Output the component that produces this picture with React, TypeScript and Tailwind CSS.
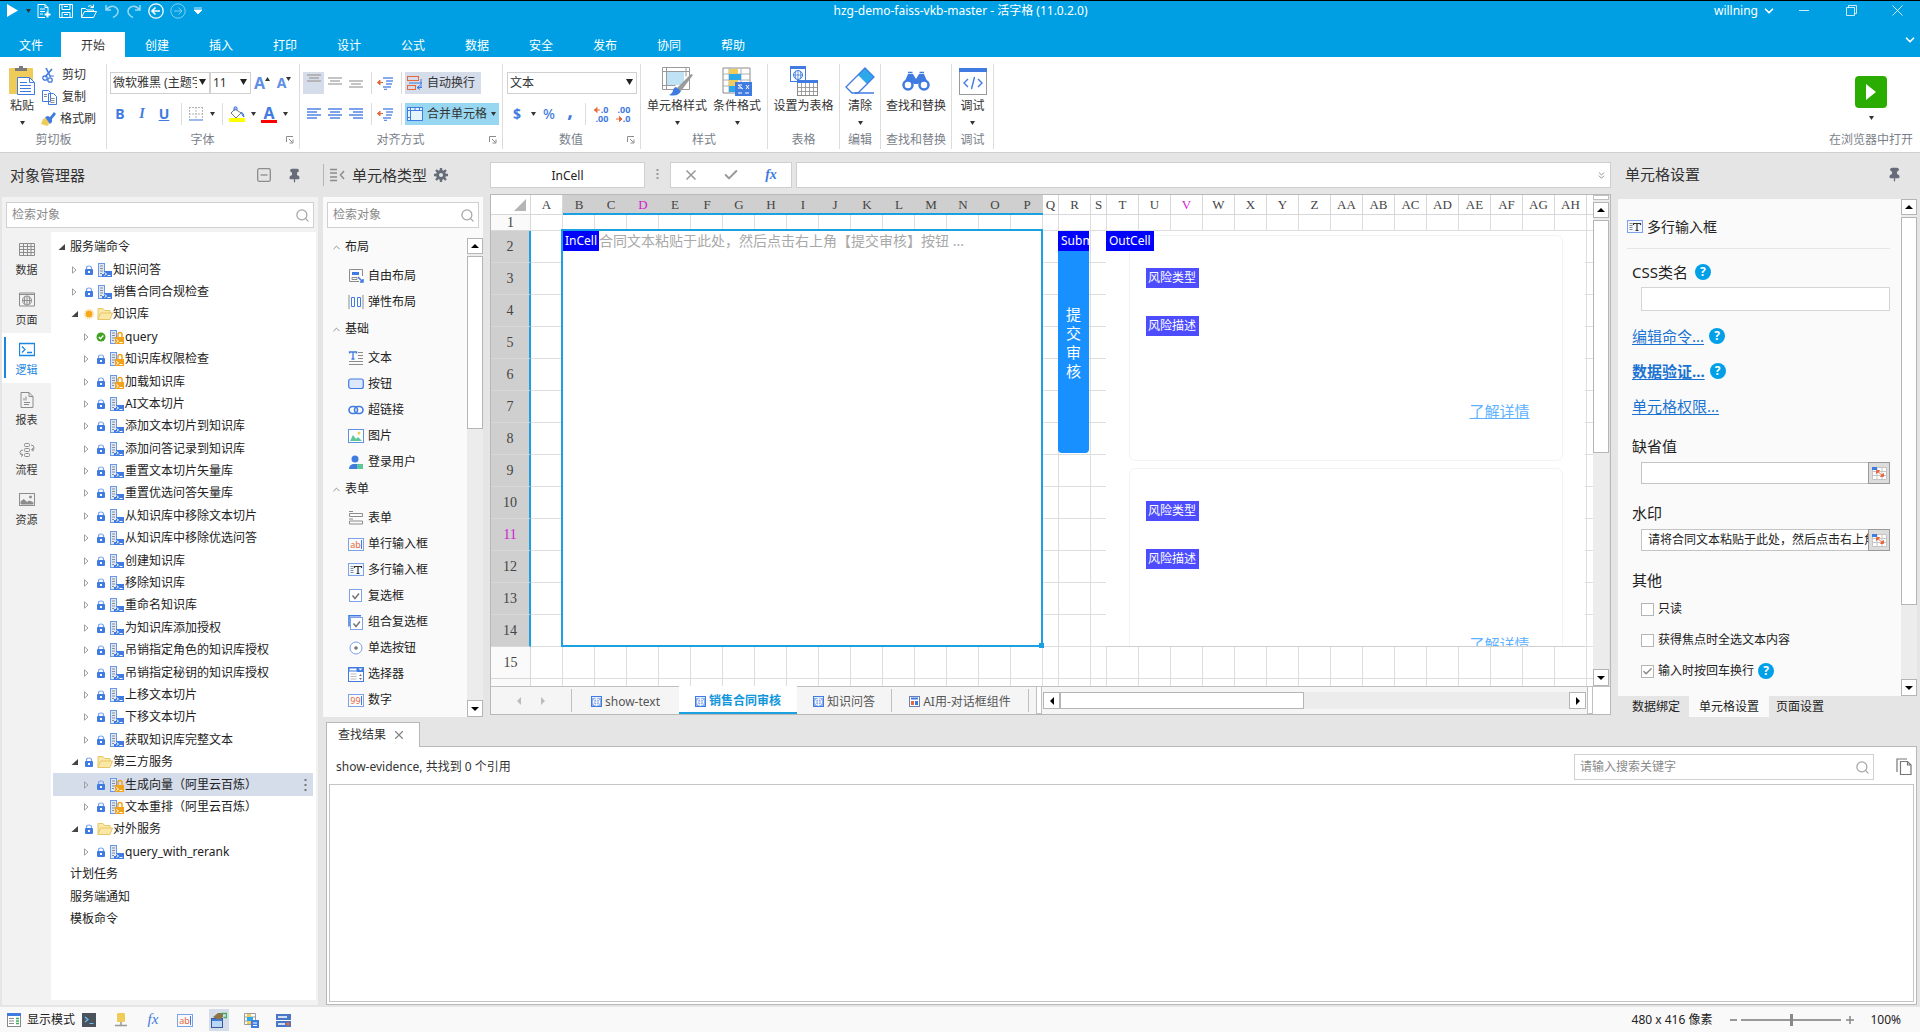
import type { ReactNode } from "react";
import { Check, ChevronDown, ChevronUp, ChevronsDown, Pin, Search, X } from "lucide-react";
import clsx from "clsx";

const BLUE = "#3f7be0";
const ORANGE = "#e8683c";
const GRAY = "#8c8c8c";

function Svg({ w = 16, h = 16, children }: { w?: number; h?: number; children: ReactNode }) {
  return (
    <svg width={w} height={h} viewBox={`0 0 ${w} ${h}`} fill="none" className="shrink-0" aria-hidden="true">
      {children}
    </svg>
  );
}

function Caret({ className = "text-[#333]" }: { className?: string }) {
  return (
    <svg width="5" height="4" viewBox="0 0 5 4" className={clsx("shrink-0", className)} aria-hidden="true">
      <path d="M0 0h5L2.5 4z" fill="currentColor" />
    </svg>
  );
}

function Arrow({ dir }: { dir: "up" | "down" | "left" | "right" }) {
  const d = {
    up: "M1 7h8L5 3z",
    down: "M1 3h8L5 7z",
    left: "M7 1v8L3 5z",
    right: "M3 1v8l4-4z",
  }[dir];
  return (
    <Svg w={10} h={10}>
      <path d={d} fill="currentColor" />
    </Svg>
  );
}

function Help() {
  return (
    <button
      aria-label="帮助"
      className="flex h-4 w-4 items-center justify-center rounded-full bg-[#00a0e9] text-xs font-bold text-white"
    >
      ?
    </button>
  );
}

/* ---------- 标题栏 ---------- */

function TitleBar() {
  return (
    <header className="grid h-[31px] grid-cols-[1fr_auto_1fr] items-start pl-px text-xs leading-[19px] text-white">
      <div className="flex h-[19px] items-center">
        <button aria-label="运行" className="flex w-[22px] justify-center">
          <Svg w={11} h={13}>
            <path d="M0 0l11 6.500L0 13z" fill="#fff" />
          </Svg>
        </button>
        <button aria-label="运行选项" className="flex w-[10px] justify-center">
          <Caret />
        </button>
        <button aria-label="新建" className="flex w-[22px] justify-center">
          <Svg w={14} h={14}>
            <path d="M1 .5h7l3 3v4M8 13.500H1V.5M8 .5v3h3M3 5h5M3 7.500h5M3 10h3" stroke="#fff" />
            <path d="M10.500 7.500v6M7.500 10.500h6" stroke="#fff" strokeWidth="2" />
          </Svg>
        </button>
        <button aria-label="保存" className="flex w-[22px] justify-center">
          <Svg w={14} h={14}>
            <path d="M.5.5h13v13H.5zM3 .5v5h8v-5M3 13.500v-5h8v5M5 10.500h4M5 2.500h4" stroke="#fff" />
          </Svg>
        </button>
        <button aria-label="打开" className="flex w-[24px] justify-center">
          <Svg w={16} h={14}>
            <path d="M.5 13.500v-9h4l1.500 1.500h6.500v2M.5 13.500l3-6h12l-3 6zM7 2.500q2-2 5 .5M12.500.5V3.500H9.500" stroke="#fff" />
          </Svg>
        </button>
        <button aria-label="撤销" className="flex w-[22px] justify-center opacity-60">
          <Svg w={14} h={14}>
            <path d="M1 1v5h5M1 6q4-5 8-3.500t4 5-5 6" stroke="#fff" strokeWidth="1.500" />
          </Svg>
        </button>
        <button aria-label="重做" className="flex w-[22px] justify-center opacity-60">
          <Svg w={14} h={14}>
            <path d="M13 1v5H8M13 6Q9 1 5 2.500t-4 5 5 6" stroke="#fff" strokeWidth="1.500" />
          </Svg>
        </button>
        <button aria-label="后退" className="flex w-[22px] justify-center">
          <Svg>
            <circle cx="8" cy="8" r="7.200" stroke="#fff" strokeWidth="1.300" />
            <path d="M12 8H4.500M7.500 4.500L4 8l3.500 3.500" stroke="#fff" strokeWidth="1.600" />
          </Svg>
        </button>
        <button aria-label="前进" className="flex w-[22px] justify-center opacity-50">
          <Svg>
            <circle cx="8" cy="8" r="7.200" stroke="#fff" />
            <path d="M4 8h7.500M8.500 4.500L12 8l-3.500 3.500" stroke="#fff" />
          </Svg>
        </button>
        <button aria-label="自定义快速访问工具栏" className="flex w-[18px] justify-center">
          <Svg w={8} h={8}>
            <path d="M0 1h8M0 3h8L4 7z" stroke="#fff" fill="#fff" strokeWidth=".8" />
          </Svg>
        </button>
      </div>
      <h1>hzg-demo-faiss-vkb-master - 活字格 (11.0.2.0)</h1>
      <div className="flex h-[19px] items-center justify-end">
        <button className="flex items-center gap-1">
          willning
          <ChevronDown size={14} strokeWidth={3} />
        </button>
        <button aria-label="最小化" className="flex w-[56px] justify-center">
          <Svg w={10} h={10}>
            <path d="M0 4.500h10" stroke="#fff" strokeOpacity=".8" />
          </Svg>
        </button>
        <button aria-label="还原" className="flex w-[38px] justify-center">
          <Svg w={11} h={11}>
            <path d="M.5 2.500h8v8h-8zM2.500 2.500v-2h8v8h-2" stroke="#fff" strokeOpacity=".8" />
          </Svg>
        </button>
        <button aria-label="关闭" className="ml-1 flex w-[46px] justify-center">
          <Svg w={11} h={11}>
            <path d="M.5.5l10 10M10.500.5l-10 10" stroke="#fff" strokeOpacity=".8" />
          </Svg>
        </button>
      </div>
    </header>
  );
}

const TABS = ["文件", "开始", "创建", "插入", "打印", "设计", "公式", "数据", "安全", "发布", "协同", "帮助"];

function RibbonTabs() {
  return (
    <nav className="flex h-[25px] pl-px text-xs text-white">
      {TABS.map((t, i) => (
        <button
          key={t}
          className={clsx("pt-[2px]", i === 0 ? "w-[60px]" : "w-16", t === "开始" && "bg-white text-[#333]")}
        >
          {t}
        </button>
      ))}
      <button aria-label="折叠功能区" className="mr-[3px] ml-auto flex items-start pt-[1px]">
        <ChevronDown size={14} strokeWidth={3} />
      </button>
    </nav>
  );
}

/* ---------- 功能区 ---------- */

function Group({
  label,
  width,
  launcher,
  children,
}: {
  label: string;
  width: string;
  launcher?: boolean;
  children: ReactNode;
}) {
  return (
    <section className={clsx("flex shrink-0 flex-col border-r border-[#dcdcdc]", width)}>
      <div className="flex-1">{children}</div>
      <div className="flex h-[18px] items-center text-xs text-[#7a7f8a]">
        <span className="flex-1 text-center whitespace-nowrap">{label}</span>
        {launcher && (
          <button aria-label={`${label}设置`} className="mr-[5px] -ml-3 flex">
            <Svg w={8} h={8}>
              <path d="M.5 6V.5H7M3 3l3.500 3.500M7 3.500V7H3.500" stroke={GRAY} />
            </Svg>
          </button>
        )}
      </div>
    </section>
  );
}

function BigButton({
  label,
  width,
  caret,
  children,
}: {
  label: string;
  width: string;
  caret?: boolean;
  children: ReactNode;
}) {
  return (
    <button className={clsx("flex flex-col items-center pt-[2px] text-xs text-[#333]", width)}>
      <span className="flex h-[30px] items-center">{children}</span>
      <span className="leading-5 whitespace-nowrap">{label}</span>
      {caret && (
        <span className="mt-[5px]">
          <Caret />
        </span>
      )}
    </button>
  );
}

function Tool({
  label,
  width = "w-[22px]",
  active,
  children,
}: {
  label: string;
  width?: string;
  active?: boolean;
  children: ReactNode;
}) {
  return (
    <button
      aria-label={label}
      className={clsx("flex h-[22px] shrink-0 items-center justify-center", width, active && "bg-[#d5dcea]")}
    >
      {children}
    </button>
  );
}

function Sep({ className }: { className: string }) {
  return <span className={clsx("h-[22px] w-px shrink-0 bg-[#dcdcdc]", className)} />;
}

function Combo({ label, value, width }: { label: string; value: string; width: string }) {
  return (
    <span className={clsx("relative flex h-[22px] shrink-0", width)}>
      <select
        aria-label={label}
        className="w-full appearance-none border border-[#d0d0d0] bg-white pr-3 pl-[2px] text-xs text-[#333]"
      >
        <option>{value}</option>
      </select>
      <span className="pointer-events-none absolute top-[7px] right-[3px] text-[#222]">
        <Svg w={8} h={6}>
          <path d="M0 0h7L3.500 6z" fill="currentColor" />
        </Svg>
      </span>
    </span>
  );
}

function HLines({ widths, color = BLUE, gap = 3 }: { widths: number[]; color?: string; gap?: number }) {
  return (
    <Svg w={14} h={12}>
      {widths.map((w, i) => (
        <rect key={i} x={(14 - w) / 2} y={i * gap} width={w} height={2} fill={color} />
      ))}
    </Svg>
  );
}

function SideLines({ right }: { right?: boolean }) {
  return (
    <Svg w={14} h={12}>
      {[14, 10, 14, 10].map((w, i) => (
        <rect key={i} x={right ? 14 - w : 0} y={i * 3} width={w} height={2} fill="#7ba2ea" />
      ))}
    </Svg>
  );
}

function IndentIcon() {
  return (
    <Svg w={16} h={13}>
      <path d="M6 1h10M9 4h7M9 7h6M6 10h8M7 12.500h3" stroke="#5f8fe6" strokeWidth="1.500" />
      <path d="M0 5.500h6M3 3L.5 5.500 3 8z" stroke={ORANGE} fill={ORANGE} />
    </Svg>
  );
}

function Ribbon() {
  return (
    <div className="flex h-[96px] border-b border-[#cfcfcf] bg-white pt-[7px] pb-[3px] pl-px">
      <Group label="剪切板" width="w-[106px]">
        <div className="flex pl-[2px]">
          <BigButton label="粘贴" width="w-[38px]" caret>
            <Svg w={26} h={30}>
              <rect x="0" y="2" width="24" height="26" rx="1" fill="#efcb5a" />
              <path d="M6 5V2h4V0h4v2h4v3z" fill="#7b7b7b" />
              <path d="M8.500 11.500h12l5 5v12h-17z" fill="#fff" stroke={BLUE} />
              <path d="M20.500 11.500v5h5M11 16.500h7M11 19.500h11M11 22.500h11M11 25.500h11" stroke={BLUE} />
            </Svg>
          </BigButton>
          <div className="flex flex-col text-xs text-[#333]">
            <button className="flex h-[22px] items-center gap-[5px] pl-px">
              <Svg w={15} h={15}>
                <path d="M4 0l4.500 9M10 1L3 9" stroke={BLUE} strokeWidth="1.600" />
                <circle cx="3" cy="10" r="2.200" stroke={BLUE} strokeWidth="1.300" />
                <circle cx="8" cy="12" r="2.200" stroke={BLUE} strokeWidth="1.300" />
                <path d="M8 8h4" stroke={BLUE} />
              </Svg>
              剪切
            </button>
            <button className="flex h-[22px] items-center gap-[5px] pl-px">
              <Svg w={15} h={15}>
                <path d="M.5.5h6l2 2v9h-8zM6.500 3.500h5l3 3v8h-8z" fill="#fff" stroke={BLUE} />
                <path d="M8.500 8.500h4M8.500 10.500h4M8.500 12.500h4M2 4.500h3M2 6.500h3" stroke={GRAY} />
              </Svg>
              复制
            </button>
            <button className="flex h-[22px] items-center gap-1">
              <Svg w={15} h={14}>
                <path d="M2 7l4-2 4 5-4 4-3-1-3-1z" fill="#efcb5a" />
                <path d="M4 5l3-1 2 1 4-5 2 2-4 5v3l-2 2z" fill={BLUE} />
              </Svg>
              格式刷
            </button>
          </div>
        </div>
      </Group>

      <Group label="字体" width="w-[193px]" launcher>
        <div className="flex flex-col gap-[9px] pt-2">
          <div className="flex pl-[3px]">
            <Combo label="字体" value="微软雅黑 (主题字体)" width="w-[100px]" />
            <Combo label="字号" value="11" width="w-[41px]" />
            <Tool label="增大字号">
              <span className="text-base font-bold text-[#5f8fe6]">A</span>
              <span className="mb-2 rotate-180">
                <Caret />
              </span>
            </Tool>
            <Tool label="减小字号">
              <span className="text-sm font-bold text-[#5f8fe6]">A</span>
              <span className="mb-2">
                <Caret />
              </span>
            </Tool>
          </div>
          <div className="flex pl-[2px] text-sm text-[#3f7be0]">
            <Tool label="加粗">
              <b>B</b>
            </Tool>
            <Tool label="倾斜">
              <b className="font-['Liberation_Serif',serif] italic">I</b>
            </Tool>
            <Tool label="下划线">
              <b className="underline">U</b>
            </Tool>
            <Sep className="mx-[6px]" />
            <Tool label="边框" width="w-4">
              <Svg w={14} h={14}>
                <path d="M.5 0v13M13.500 0v13M0 .5h14M7 0v13M0 7h14" stroke="#b5b5b5" strokeDasharray="2 1" />
                <path d="M0 13h14" stroke="#7fa3e8" strokeWidth="1.500" />
              </Svg>
            </Tool>
            <Tool label="边框选项" width="w-4">
              <Caret />
            </Tool>
            <Sep className="mr-[6px] ml-[2px]" />
            <Tool label="填充颜色" width="w-4">
              <Svg w={16} h={16}>
                <path d="M6 3l6 4-5 5-5-5z" stroke="#777" fill="#fff" />
                <path d="M5 5V1.500q1.500-1.500 3 0V4M12 6q3 1 3 5-2-1-2-3z" stroke={BLUE} fill={BLUE} fillOpacity=".4" />
                <rect y="12" width="16" height="4" fill="#ff0" />
              </Svg>
            </Tool>
            <Tool label="填充颜色选项" width="w-4">
              <Caret />
            </Tool>
            <Tool label="字体颜色" width="w-4">
              <span className="flex flex-col items-center">
                <b className="text-base leading-[14px]">A</b>
                <span className="h-[3px] w-4 bg-[#f00]" />
              </span>
            </Tool>
            <Tool label="字体颜色选项" width="w-4">
              <Caret />
            </Tool>
          </div>
        </div>
      </Group>

      <Group label="对齐方式" width="w-[203px]" launcher>
        <div className="flex flex-col gap-[9px] pt-2 pl-[3px] text-xs text-[#333]">
          <div className="flex">
            <Tool label="顶端对齐" width="w-[21px]" active>
              <span className="mb-[6px]">
                <HLines widths={[14, 10, 14]} color="#b5b5b5" />
              </span>
            </Tool>
            <Tool label="垂直居中" width="w-[21px]">
              <HLines widths={[14, 10, 14]} color="#c4c4c4" />
            </Tool>
            <Tool label="底端对齐" width="w-[21px]">
              <span className="mt-[6px]">
                <HLines widths={[14, 10, 14]} color="#c4c4c4" />
              </span>
            </Tool>
            <Sep className="mx-[5px]" />
            <Tool label="减少缩进" width="w-4">
              <IndentIcon />
            </Tool>
            <Sep className="mr-[3px] ml-2" />
            <button className="flex h-[22px] w-[76px] items-center gap-1 bg-[#d5dcea] pl-[2px]">
              <Svg w={16} h={15}>
                <rect x=".5" y=".5" width="11" height="4" stroke={ORANGE} />
                <rect x=".5" y="9.500" width="8" height="4" stroke={ORANGE} />
                <path d="M2 7h13M14 3v8M11 11.500h4M13 9.500l-3 2 3 2" stroke={BLUE} />
              </Svg>
              自动换行
            </button>
          </div>
          <div className="flex">
            <Tool label="左对齐" width="w-[21px]">
              <SideLines />
            </Tool>
            <Tool label="水平居中" width="w-[21px]">
              <HLines widths={[14, 10, 14, 10]} color="#7ba2ea" />
            </Tool>
            <Tool label="右对齐" width="w-[21px]">
              <SideLines right />
            </Tool>
            <Sep className="mx-[5px]" />
            <Tool label="增加缩进" width="w-4">
              <IndentIcon />
            </Tool>
            <Sep className="mr-[3px] ml-2" />
            <button className="flex h-[22px] w-[94px] items-center gap-1 bg-[#98d7f2] pl-[2px]">
              <Svg w={16} h={14}>
                <rect x=".5" y=".5" width="15" height="13" fill="#e5f3fb" stroke={BLUE} />
                <path d="M0 3.500h16M3.500 0v14M12.500 0v3.500M8 0v3.500M0 10.500h3.500" stroke={BLUE} />
              </Svg>
              合并单元格
              <Caret />
            </button>
          </div>
        </div>
      </Group>

      <Group label="数值" width="w-[138px]" launcher>
        <div className="flex flex-col gap-[9px] pt-2 pl-1">
          <Combo label="数值格式" value="文本" width="w-[130px]" />
          <div className="flex text-sm font-medium text-[#3f7be0]">
            <Tool label="货币" width="w-5">
              <b>$</b>
            </Tool>
            <Tool label="货币选项" width="w-3">
              <Caret />
            </Tool>
            <Tool label="百分比" width="w-5">
              %
            </Tool>
            <Tool label="千位分隔">
              <b className="mb-2 text-xl">,</b>
            </Tool>
            <Sep className="mx-1" />
            <Tool label="增加小数位">
              <span className="flex flex-col items-end text-[9px] leading-[9px] font-bold">
                <span className="flex items-center">
                  <Svg w={7} h={6}>
                    <path d="M0 3h6M3 .5L.5 3 3 5.500z" stroke={ORANGE} fill={ORANGE} />
                  </Svg>
                  .0
                </span>
                <span>.00</span>
              </span>
            </Tool>
            <Tool label="减少小数位">
              <span className="flex flex-col items-end text-[9px] leading-[9px] font-bold">
                <span>.00</span>
                <span className="flex items-center">
                  <Svg w={7} h={6}>
                    <path d="M0 3h6M3.500 .5L6 3 3.500 5.500z" stroke={ORANGE} fill={ORANGE} />
                  </Svg>
                  .0
                </span>
              </span>
            </Tool>
          </div>
        </div>
      </Group>

      <Group label="样式" width="w-[127px]">
        <div className="flex pl-[3px]">
          <BigButton label="单元格样式" width="w-[66px]" caret>
            <Svg w={32} h={30}>
              <path d="M1.500 1.500h27v22h-27zM5.500 1.500v22M1.500 5.500h27M25 1.500v9M1.500 19.500h13" stroke="#9a9a9a" />
              <rect x="6" y="6" width="17" height="13" fill="#bfe3f5" />
              <path d="M30 8l2 1-12 16-4-3z" fill="#9a9a9a" />
              <path d="M15 21l5 4q-3 6-12 4 4-2 4-5 1-3 3-3z" fill={BLUE} />
            </Svg>
          </BigButton>
          <BigButton label="条件格式" width="w-[54px]" caret>
            <Svg w={30} h={30}>
              <path d="M1 2h27v25H1z" fill="#fff" stroke="#8a8a8a" />
              <path d="M1 8h27M1 14h27M1 20h27M7 2v25M19 2v25" stroke="#b0b0b0" />
              <rect x="7" y="3" width="9" height="5" fill="#efcb5a" />
              <rect x="7" y="8" width="12" height="6" fill="#2ba9ea" />
              <rect x="7" y="14" width="9" height="6" fill="#efcb5a" />
              <rect x="7" y="20" width="6" height="6" fill="#2ba9ea" />
              <rect x="13" y="16" width="17" height="14" fill={BLUE} />
              <path d="M16 19h4M16 22h4M16 19l5 4M24 19l3 4M24 23l3-4M16 27h4M23 27h4" stroke="#fff" />
            </Svg>
          </BigButton>
        </div>
      </Group>

      <Group label="表格" width="w-[72px]">
        <BigButton label="设置为表格" width="w-full">
          <Svg w={28} h={30}>
            <rect x=".5" y=".5" width="15" height="15" fill="#fff" stroke={BLUE} />
            <rect width="16" height="3" fill={BLUE} />
            <circle cx="8" cy="9" r="4.500" stroke={BLUE} />
            <path d="M3.500 9h9M8 4.500v9M6 5q-2 4 0 8M10 5q2 4 0 8" stroke={BLUE} strokeWidth=".8" />
            <rect x="7.500" y="14.500" width="20" height="15" fill="#fff" stroke="#8a8a8a" />
            <rect x="7" y="14" width="21" height="3" fill={BLUE} />
            <path d="M7 21.500h21M7 25.500h21M11.500 17v13M15.500 17v13M19.500 17v13M23.500 17v13" stroke="#8a8a8a" strokeWidth=".8" />
          </Svg>
        </BigButton>
      </Group>

      <Group label="编辑" width="w-[41px]">
        <BigButton label="清除" width="w-full" caret>
          <Svg w={30} h={28}>
            <path d="M20 1l9 9-7 7-9-9z" fill="#2ba9ea" />
            <path d="M20 1l9 9-16 16H7l-6-6z" stroke={BLUE} strokeWidth="1.300" />
            <path d="M10 26h19" stroke={BLUE} strokeWidth="1.500" />
          </Svg>
        </BigButton>
      </Group>

      <Group label="查找和替换" width="w-[71px]">
        <BigButton label="查找和替换" width="w-full">
          <Svg w={28} h={20}>
            <path d="M3 10l3-7h5l3 5 3-5h5l3 7-5-1-4 4h-4l-4-4z" fill={BLUE} />
            <path d="M6 1.500h4.500M17.500 1.500H22" stroke={BLUE} strokeWidth="1.500" />
            <circle cx="6" cy="14" r="4.500" stroke={BLUE} strokeWidth="2.500" fill="#fff" />
            <circle cx="22" cy="14" r="4.500" stroke={BLUE} strokeWidth="2.500" fill="#fff" />
          </Svg>
        </BigButton>
      </Group>

      <Group label="调试" width="w-[42px]">
        <BigButton label="调试" width="w-full" caret>
          <Svg w={28} h={27}>
            <rect x=".5" y=".5" width="27" height="26" stroke="#9a9a9a" />
            <rect width="28" height="4" fill={BLUE} />
            <path d="M9 11l-4 4 4 4M19 11l4 4-4 4M15.500 9l-3 12" stroke={BLUE} strokeWidth="1.400" />
          </Svg>
        </BigButton>
      </Group>

      <div className="ml-auto flex w-[98px] flex-col items-center pt-3">
        <button aria-label="在浏览器中打开" className="flex h-8 w-8 items-center justify-center rounded bg-[#2aad00]">
          <Svg w={10} h={16}>
            <path d="M0 0l10 8-10 8z" fill="#fff" />
          </Svg>
        </button>
        <span className="mt-2">
          <Caret />
        </span>
        <span className="mt-auto text-xs leading-[18px] text-[#7a7f8a]">在浏览器中打开</span>
      </div>
    </div>
  );
}

/* ---------- 对象管理器 ---------- */

function SearchBox({ label, width = "w-full" }: { label: string; width?: string }) {
  return (
    <label className={clsx("flex h-[26px] items-center border border-[#d0d0d0] bg-white pr-[3px] pl-[5px]", width)}>
      <input
        aria-label={label}
        placeholder={label}
        className="min-w-0 flex-1 text-xs outline-none placeholder:text-[#8a8a8a]"
      />
      <Search size={15} strokeWidth={2} className="text-[#a5a5a5]" />
    </label>
  );
}

const SIDE: { label: string; icon: ReactNode }[] = [
  {
    label: "数据",
    icon: <path d="M.5 1.500h15v12H.5zM.5 4.500h15M.5 7.500h15M.5 10.500h15M4.500 1.500v12M8.500 1.500v12M12 1.500v12" />,
  },
  {
    label: "页面",
    icon: (
      <>
        <path d="M.5 1h15v13H.5zM.5 2.500h15" />
        <circle cx="8" cy="8.500" r="4.500" />
        <path d="M3.500 8.500h9M8 4v9M6 4.500q-1.500 4 0 8M10 4.500q1.500 4 0 8" />
      </>
    ),
  },
  { label: "逻辑", icon: <path d="M.5 1.500h15v12H.5zM3 4.500l3 3-3 3M8 10.500h5" strokeWidth="1.300" /> },
  {
    label: "报表",
    icon: <path d="M2 .5h8l4 4v11H2zM10 .5v4h4M5 8.500V6M7 8.500V4.500M5 10.500h6M5 12.500h5" />,
  },
  {
    label: "流程",
    icon: (
      <>
        <rect x="5.500" y="1.500" width="5" height="3" rx="1" />
        <rect x="5.500" y="6.500" width="5" height="3" rx="1" />
        <rect x="5.500" y="11.500" width="5" height="3" rx="1" />
        <path d="M12 3q3 0 3 3t-2 2M4 8Q1 8 1 10.500T3.500 13M14 6l-1.500 2L14.500 9M2.500 11.500l1.500 1.500-2 1.500" />
      </>
    ),
  },
  {
    label: "资源",
    icon: (
      <>
        <rect x=".5" y="1.500" width="15" height="12" />
        <path d="M2 12V9.500l3-2 3 3 2-1.500 4 1.500V12z" fill="currentColor" />
        <circle cx="11.500" cy="5" r="1" fill="currentColor" />
      </>
    ),
  },
];

type Node = { name: string; level: 0 | 1 | 2; icon?: "folder" | "cmd" | "locked"; state?: "lock" | "sun" | "ok"; open?: boolean };

const TREE: Node[] = [
  { name: "服务端命令", level: 0, open: true },
  { name: "知识问答", level: 1, icon: "cmd", state: "lock" },
  { name: "销售合同合规检查", level: 1, icon: "cmd", state: "lock" },
  { name: "知识库", level: 1, icon: "folder", state: "sun", open: true },
  { name: "query", level: 2, icon: "locked", state: "ok" },
  { name: "知识库权限检查", level: 2, icon: "locked", state: "lock" },
  { name: "加载知识库", level: 2, icon: "locked", state: "lock" },
  { name: "AI文本切片", level: 2, icon: "cmd", state: "lock" },
  { name: "添加文本切片到知识库", level: 2, icon: "cmd", state: "lock" },
  { name: "添加问答记录到知识库", level: 2, icon: "cmd", state: "lock" },
  { name: "重置文本切片矢量库", level: 2, icon: "cmd", state: "lock" },
  { name: "重置优选问答矢量库", level: 2, icon: "cmd", state: "lock" },
  { name: "从知识库中移除文本切片", level: 2, icon: "cmd", state: "lock" },
  { name: "从知识库中移除优选问答", level: 2, icon: "cmd", state: "lock" },
  { name: "创建知识库", level: 2, icon: "cmd", state: "lock" },
  { name: "移除知识库", level: 2, icon: "cmd", state: "lock" },
  { name: "重命名知识库", level: 2, icon: "cmd", state: "lock" },
  { name: "为知识库添加授权", level: 2, icon: "cmd", state: "lock" },
  { name: "吊销指定角色的知识库授权", level: 2, icon: "cmd", state: "lock" },
  { name: "吊销指定秘钥的知识库授权", level: 2, icon: "cmd", state: "lock" },
  { name: "上移文本切片", level: 2, icon: "cmd", state: "lock" },
  { name: "下移文本切片", level: 2, icon: "cmd", state: "lock" },
  { name: "获取知识库完整文本", level: 2, icon: "cmd", state: "lock" },
  { name: "第三方服务", level: 1, icon: "folder", state: "lock", open: true },
  { name: "生成向量（阿里云百炼）", level: 2, icon: "locked", state: "lock" },
  { name: "文本重排（阿里云百炼）", level: 2, icon: "locked", state: "lock" },
  { name: "对外服务", level: 1, icon: "folder", state: "lock", open: true },
  { name: "query_with_rerank", level: 2, icon: "cmd", state: "lock" },
  { name: "计划任务", level: 0 },
  { name: "服务端通知", level: 0 },
  { name: "模板命令", level: 0 },
];

function StateIcon({ state }: { state: Node["state"] }) {
  if (state === "sun")
    return (
      <Svg w={12} h={12}>
        <circle cx="6" cy="6" r="4.500" stroke="#fbd58a" strokeWidth="1.500" strokeDasharray="1 1" />
        <circle cx="6" cy="6" r="3.500" fill="#f9a71c" />
      </Svg>
    );
  if (state === "ok")
    return (
      <Svg w={12} h={12}>
        <circle cx="6" cy="6" r="4.500" fill="#3fa21f" />
        <path d="M3.800 6l1.600 1.700L8.400 4.600" stroke="#fff" strokeWidth="1.400" />
      </Svg>
    );
  return (
    <Svg w={12} h={12}>
      <path d="M3.500 6V4q0-2 2.500-2t2.500 2v2" stroke="#7ba2ea" strokeWidth="1.200" />
      <rect x="2" y="5" width="8" height="6" rx="1" fill={BLUE} />
      <rect x="5" y="7" width="2" height="2" fill="#fff" />
    </Svg>
  );
}

function NodeIcon({ icon }: { icon: Node["icon"] }) {
  if (icon === "folder")
    return (
      <Svg w={16} h={14}>
        <path d="M1 12.500V1.500h5l1.500 2H13v3" fill="#fbe8a6" stroke="#e6c766" />
        <path d="M1 12.500l2.500-6.500H15.500L13 12.500z" fill="#fbe8a6" stroke="#e6c766" />
      </Svg>
    );
  const locked = icon === "locked";
  const c = locked ? "#f3a21b" : BLUE;
  return (
    <Svg w={14} h={14}>
      <rect x=".5" y=".5" width="6" height="13" fill="#dde8fa" stroke="#6b97e8" />
      <path d="M2 3h3M2 5.500h3M2 8h3M2 10.500h2" stroke={GRAY} />
      <path d={locked ? "M5 7h9v7H5z" : "M6 8h8v6H4v-3h2z"} fill={c} />
      {locked && <path d="M8 7V4.500q0-2 2-2t2 2V7" stroke={c} strokeWidth="1.500" />}
      <path d="M6.500 9.500l2 1.500-2 1.500M9.500 12.500h3" stroke="#fff" />
    </Svg>
  );
}

function Expander({ node }: { node: Node }) {
  if (node.level === 0 && !node.open) return <span className="w-3" />;
  return (
    <span className="flex w-3 justify-center">
      <Svg w={8} h={8}>
        {node.open ? <path d="M7 1v6H.5z" fill="#444" /> : <path d="M1.500.8v6.400L5 4z" stroke="#a0a0a0" />}
      </Svg>
    </span>
  );
}

function ObjectManager() {
  return (
    <aside className="flex w-[316px] shrink-0 flex-col">
      <div className="flex h-11 items-center pl-2 text-[#333]">
        <h2 className="flex-1 text-[15px]">对象管理器</h2>
        <button aria-label="全部折叠" className="mr-[16px]">
          <Svg w={14} h={14}>
            <rect x=".7" y=".7" width="12.600" height="12.600" rx="1.500" stroke={GRAY} strokeWidth="1.300" />
            <path d="M3.500 7h7" stroke={GRAY} strokeWidth="1.300" />
          </Svg>
        </button>
        <button aria-label="固定" className="mr-4 text-[#666c7a]">
          <Pin size={15} fill="currentColor" />
        </button>
      </div>
      <div className="mb-[2px] flex min-h-0 flex-1 flex-col bg-[#f2f2f2] pt-[5px]">
        <div className="px-1">
          <SearchBox label="检索对象" />
        </div>
        <div className="mt-1 mb-[5px] flex min-h-0 flex-1">
          <nav className="w-[49px] shrink-0 pt-px">
            {SIDE.map((s) => {
              const on = s.label === "逻辑";
              return (
                <button
                  key={s.label}
                  className={clsx(
                    "relative flex h-[50px] w-full flex-col items-center gap-[4px] pt-[9px] text-[11px] leading-[16px]",
                    on ? "bg-white text-[#1a86e0]" : "text-[#333]",
                  )}
                >
                  {on && <span className="absolute top-1 left-[2px] h-[41px] w-[2px] bg-[#1a86e0]" />}
                  <svg
                    width="16"
                    height="16"
                    viewBox="0 0 16 16"
                    fill="none"
                    stroke="currentColor"
                    className={on ? "text-[#1a86e0]" : "text-[#8c8c8c]"}
                    aria-hidden="true"
                  >
                    {s.icon}
                  </svg>
                  {s.label}
                </button>
              );
            })}
          </nav>
          <ul className="mr-[2px] flex flex-1 flex-col bg-white pt-1 pr-[3px] pb-[70px] pl-[2px] text-xs text-[#222]">
            {TREE.map((n) => {
              const selected = n.name.startsWith("生成向量");
              return (
                <li
                  key={n.name}
                  className={clsx(
                    "flex flex-1 items-center",
                    n.level === 0 && "gap-[2px] pl-[3px]",
                    n.level === 1 && "pl-4",
                    n.level === 2 && "pl-7",
                    selected && "bg-[#d5dcea]",
                  )}
                >
                  <Expander node={n} />
                  {n.level > 0 && (
                    <>
                      <span className="ml-[2px]">
                        <StateIcon state={n.state} />
                      </span>
                      <span className="mr-px ml-[2px] flex w-[15px] justify-center">
                        <NodeIcon icon={n.icon} />
                      </span>
                    </>
                  )}
                  <span className="whitespace-nowrap">{n.name}</span>
                  {selected && (
                    <button aria-label="更多" className="mr-[6px] ml-auto">
                      <Svg w={3} h={12}>
                        <path d="M.5 0h2v2h-2zM.5 5h2v2h-2zM.5 10h2v2h-2z" fill="#777" />
                      </Svg>
                    </button>
                  )}
                </li>
              );
            })}
          </ul>
        </div>
      </div>
    </aside>
  );
}

/* ---------- 单元格类型 ---------- */

function VScroll({ thumb, split, className }: { thumb: string; split?: boolean; className?: string }) {
  return (
    <div className={clsx("flex w-4 shrink-0 flex-col bg-[#ececec] text-black", className)}>
      {split && <span className="mb-[2px] h-[5px] border border-[#c0c0c0] bg-white" />}
      <button aria-label="向上滚动" className="flex h-4 items-center justify-center border border-[#b5b5b5] bg-white">
        <Arrow dir="up" />
      </button>
      <span className={clsx("mt-[2px] border border-[#b5b5b5] bg-white", thumb)} />
      <button
        aria-label="向下滚动"
        className="mt-auto flex h-[17px] items-center justify-center border border-[#b5b5b5] bg-white"
      >
        <Arrow dir="down" />
      </button>
    </div>
  );
}

function MultiLineIcon() {
  return (
    <Svg w={16} h={14}>
      <rect x=".5" y=".5" width="15" height="12" fill="#f4f8ff" stroke="#7ba2ea" />
      <path d="M2.500 3.500h3M2.500 5.500h3M2.500 7.500h3M2.500 9.500h3" stroke={GRAY} />
      <path d="M6.500 5V3.500h7V5M10 3.500v7M8.500 10.500h3" stroke="#333" strokeWidth="1.200" />
    </Svg>
  );
}

const TextBoxIcon = ({ t }: { t: string }) => (
  <span className="flex h-[13px] w-4 items-center justify-center border border-[#7ba2ea] text-[9px] leading-none text-[#e8683c]">
    {t}
    <span className="h-[9px] w-px bg-[#3f7be0]" />
  </span>
);

const CELL_TYPES: { title: string; items: [string, ReactNode][] }[] = [
  {
    title: "布局",
    items: [
      [
        "自由布局",
        <Svg w={16} h={14} key="i">
          <path d="M11 12.500H1.500V.5h13V7" stroke={GRAY} />
          <path d="M4 3h7v3H4z" fill={BLUE} />
          <path d="M4 8.500h5v2H4z" stroke={GRAY} />
          <path d="M10 8l5 5M15 10v3h-3" stroke={BLUE} strokeWidth="1.500" />
        </Svg>,
      ],
      [
        "弹性布局",
        <Svg w={16} h={14} key="i">
          <path d="M1 0v14M15 0v14" stroke={GRAY} />
          <path d="M3.500 2.500h3v9h-3zM9.500 2.500h3v9h-3z" stroke={BLUE} />
        </Svg>,
      ],
    ],
  },
  {
    title: "基础",
    items: [
      [
        "文本",
        <Svg w={16} h={14} key="i">
          <path d="M1.500 2.500V1h7v1.500M5 1v7M3.500 8h3" stroke={BLUE} strokeWidth="1.300" />
          <path d="M10 1.500h5M10 4.500h5M10 7.500h5M1 10.500h14M1 13.500h14" stroke={GRAY} />
        </Svg>,
      ],
      [
        "按钮",
        <Svg w={16} h={12} key="i">
          <rect x=".7" y="1" width="14.600" height="9.500" rx="2" fill="#dce8fb" stroke={BLUE} strokeWidth="1.200" />
        </Svg>,
      ],
      [
        "超链接",
        <Svg w={16} h={10} key="i">
          <rect x="1" y="1.500" width="8.500" height="7" rx="3.500" stroke={BLUE} strokeWidth="1.600" />
          <rect x="6.500" y="1.500" width="8.500" height="7" rx="3.500" stroke={BLUE} strokeWidth="1.600" />
        </Svg>,
      ],
      [
        "图片",
        <Svg w={16} h={14} key="i">
          <rect x=".5" y=".5" width="15" height="13" fill="#fff" stroke="#5f90e6" />
          <path d="M2 12l3-6 3 4 2-2 4 4z" fill="#5bc79a" />
          <circle cx="11" cy="4" r="1.500" fill="#efcb5a" />
        </Svg>,
      ],
      [
        "登录用户",
        <Svg w={16} h={15} key="i">
          <circle cx="7" cy="4" r="3.500" fill={BLUE} />
          <path d="M1 14q0-4 4-5h4q3 1 3 5z" fill={BLUE} />
          <rect x="9" y="9" width="6" height="5" fill="#5bc79a" />
        </Svg>,
      ],
    ],
  },
  {
    title: "表单",
    items: [
      [
        "表单",
        <Svg w={16} h={14} key="i">
          <path d="M1 .5h4M1 8h4M1.500 2.500h13v3h-13zM1.500 10h13v3h-13z" stroke={GRAY} />
        </Svg>,
      ],
      ["单行输入框", <TextBoxIcon t="ab" key="i" />],
      ["多行输入框", <MultiLineIcon key="i" />],
      [
        "复选框",
        <Svg w={14} h={14} key="i">
          <rect x=".5" y=".5" width="12" height="12" fill="#fff" stroke="#7ba2ea" />
          <path d="M3.500 6.500l2.500 3 4-5" stroke="#777" strokeWidth="1.500" />
        </Svg>,
      ],
      [
        "组合复选框",
        <Svg w={16} h={15} key="i">
          <path d="M1 11.500V.8h12" stroke={BLUE} strokeWidth="1.500" />
          <rect x="2.500" y="2.500" width="12" height="12" fill="#fff" stroke="#7ba2ea" />
          <path d="M5.500 8.500l2.500 3 4-5" stroke="#777" strokeWidth="1.500" />
        </Svg>,
      ],
      [
        "单选按钮",
        <Svg w={14} h={14} key="i">
          <circle cx="7" cy="7" r="6" fill="#fff" stroke="#7ba2ea" />
          <circle cx="7" cy="7" r="1.800" fill="#777" />
        </Svg>,
      ],
      [
        "选择器",
        <Svg w={16} h={15} key="i">
          <rect x=".5" y=".5" width="15" height="14" fill="#fff" stroke={BLUE} />
          <path d="M1 1h8v3H1z" fill="#fff" stroke={BLUE} />
          <rect x="9" y="0" width="7" height="5" fill={BLUE} />
          <path d="M10.500 1.500h4l-2 2z" fill="#fff" />
          <path d="M2.500 7h6M2.500 9.500h6M2.500 12h6" stroke="#bbb" />
          <path d="M11 9l1.500-2L14 9zM11 11l1.500 2L14 11z" fill="#777" />
        </Svg>,
      ],
      ["数字", <TextBoxIcon t="99" key="i" />],
      ["日期", <TextBoxIcon t="" key="i" />],
    ],
  },
];

function CellTypes() {
  return (
    <section className="flex w-[160px] shrink-0 flex-col">
      <div className="flex h-11 items-center text-[#333]">
        <span className="h-[22px] w-px bg-[#b5b5b5]" />
        <button aria-label="折叠面板" className="mr-[6px] ml-[6px]">
          <Svg w={16} h={14}>
            <path d="M0 1.500h7M0 5h7M0 9h7M0 12.500h7M14 3L10.500 7l3.500 4" stroke={GRAY} strokeWidth="1.500" />
          </Svg>
        </button>
        <h2 className="text-[15px]">单元格类型</h2>
        <button aria-label="设置" className="ml-[7px]">
          <Svg w={14} h={14}>
            <circle cx="7" cy="7" r="3.500" stroke="#666c7a" strokeWidth="3" />
            <path
              d="M7 0v3M7 11v3M0 7h3M11 7h3M2 2l2 2M10 10l2 2M12 2l-2 2M4 10l-2 2"
              stroke="#666c7a"
              strokeWidth="2.400"
            />
          </Svg>
        </button>
      </div>
      <div className="flex min-h-0 flex-1 flex-col bg-[#fafafa] pt-[5px]">
        <div className="px-1">
          <SearchBox label="检索对象" />
        </div>
        <div className="flex min-h-0 flex-1 pt-[5px]">
          <div className="min-h-0 flex-1 overflow-hidden text-xs text-[#222]">
            {CELL_TYPES.map((g) => (
              <div key={g.title}>
                <button className="mb-[2px] flex h-7 items-center gap-[3px] pl-2">
                  <ChevronUp size={11} className="text-[#888]" />
                  {g.title}
                </button>
                {g.items.map(([name, icon]) => (
                  <button key={name} className="flex h-[26px] w-full items-center pl-[25px]">
                    <span className="mr-[4px] flex w-4 justify-center">{icon}</span>
                    {name}
                  </button>
                ))}
              </div>
            ))}
          </div>
          <VScroll thumb="h-[173px]" className="mt-[5px]" />
        </div>
      </div>
    </section>
  );
}

/* ---------- 表格设计区 ---------- */

const COLS = [
  "A", "B", "C", "D", "E", "F", "G", "H", "I", "J", "K", "L", "M", "N", "O", "P", "Q", "R", "S", "T", "U", "V",
  "W", "X", "Y", "Z", "AA", "AB", "AC", "AD", "AE", "AF", "AG", "AH",
];
const ROWS = Array.from({ length: 15 }, (_, i) => i + 1);

function RiskCard() {
  return (
    <article className="relative mx-auto mb-[7px] h-[226px] w-[434px] rounded-md border border-[#f3f3f3] bg-white pt-8 pl-4">
      <div className="flex w-[53px] flex-col gap-[28px] text-xs leading-5 text-white">
        <span className="bg-[#4d4dff] text-center">风险类型</span>
        <span className="bg-[#4d4dff] text-center">风险描述</span>
      </div>
      <a href="#detail" className="absolute right-[32px] bottom-[38px] text-[15px] leading-[22px] text-[#5db1ff] underline">
        了解详情
      </a>
    </article>
  );
}

function Sheet() {
  return (
    <div className="relative min-w-0 flex-1 overflow-hidden bg-white">
      <table className="w-full table-fixed border-separate border-spacing-0 font-['Liberation_Serif','Noto_Sans_CJK_SC',serif] text-[#444]">
        <colgroup>
          <col className="w-10" />
          {COLS.map((c) => (
            <col key={c} className={c === "Q" || c === "S" ? "w-4" : "w-8"} />
          ))}
          <col />
        </colgroup>
        <thead className="text-[13px] leading-[17px]">
          <tr className="h-5">
            <th aria-label="全选" className="border-r border-b border-[#d8d8d8] bg-white p-0">
              <span className="flex h-[19px] items-end justify-end pr-1 pb-[3px]">
                <Svg w={12} h={12}>
                  <path d="M12 0v12H0z" fill="#b5b5b5" />
                </Svg>
              </span>
            </th>
            {COLS.map((c, i) => {
              const sel = i >= 1 && i <= 15;
              return (
                <th
                  key={c}
                  className={clsx(
                    "p-0 font-normal",
                    sel ? "border-b-2 border-[#1ba1e2] bg-[#cfcfcf]" : "border-r border-b border-[#d8d8d8]",
                    (c === "D" || c === "V") && "text-[#d21ad2]",
                  )}
                >
                  {c}
                </th>
              );
            })}
            <th className="border-b border-[#d8d8d8] p-0" />
          </tr>
        </thead>
        <tbody className="text-[14px]">
          {ROWS.map((r) => {
            const sel = r >= 2 && r <= 14;
            return (
              <tr key={r} className={r === 1 ? "h-4 leading-[15px]" : "h-8 leading-[31px]"}>
                <th
                  className={clsx(
                    "border-b border-b-[#d8d8d8] p-0 font-normal",
                    sel ? "border-r-2 border-r-[#1ba1e2] bg-[#cfcfcf]" : "border-r border-r-[#d8d8d8] bg-[#fafafa]",
                    r === 11 && "text-[#d21ad2]",
                  )}
                >
                  {r}
                </th>
                {COLS.map((c) => (
                  <td key={c} className="border-r border-b border-[#dedede] p-0" />
                ))}
                <td className="border-b border-[#dedede] p-0" />
              </tr>
            );
          })}
          <tr className="h-8">
            <th className="border-r border-[#d8d8d8] bg-[#fafafa] p-0" />
            {COLS.map((c) => (
              <td key={c} className="border-r border-[#dedede] p-0" />
            ))}
            <td />
          </tr>
        </tbody>
      </table>

      {/* 画布上的单元格 */}
      <div className="absolute top-[34px] left-[70px] h-[418px] w-[482px] border-2 border-[#1ba1e2] bg-white">
        <div className="flex leading-5 whitespace-nowrap">
          <span className="w-9 bg-[#0000ff] text-center text-xs leading-5 text-white">InCell</span>
          <p className="text-sm leading-5 text-[#a9a9a9]">合同文本粘贴于此处，然后点击右上角【提交审核】按钮 ...</p>
        </div>
        <span className="absolute -right-[3px] -bottom-[3px] h-[5px] w-[5px] bg-[#1ba1e2]" />
      </div>

      <button className="absolute top-[36px] left-[567px] flex h-[222px] w-[31px] flex-col items-center overflow-hidden rounded-b bg-[#1890ff] text-[15px] leading-[19px] text-white">
        <span className="mb-[54px] w-full overflow-hidden bg-[#0000ff] pl-[3px] text-left text-xs leading-5">
          Submit
        </span>
        {"提交审核".split("").map((ch) => (
          <span key={ch}>{ch}</span>
        ))}
      </button>

      <div className="absolute top-[36px] left-[615px] h-[416px] w-[479px] overflow-hidden border-b border-[#d0d0d0] bg-white pt-1">
        <RiskCard />
        <RiskCard />
        <span className="absolute top-0 left-0 bg-[#0000ff] px-[3px] text-xs leading-5 text-white">OutCell</span>
      </div>
    </div>
  );
}

function PageIcon() {
  return (
    <Svg w={11} h={11}>
      <rect width="11" height="11" fill="#8fb0ee" />
      <circle cx="5.500" cy="6" r="3.200" stroke="#fff" />
      <path d="M5.500 2v8M2 6h7M1 1.500h9" stroke="#fff" strokeWidth=".8" />
      <rect x=".5" y=".5" width="10" height="10" stroke={BLUE} />
    </Svg>
  );
}

function ComponentIcon() {
  return (
    <Svg w={11} h={11}>
      <rect x=".5" y=".5" width="10" height="10" fill="#fff" stroke="#6d7fb0" />
      <path d="M2 2.500h7" stroke={BLUE} strokeWidth="2" />
      <rect x="2" y="5" width="3" height="4" fill={ORANGE} />
      <rect x="6" y="5" width="3" height="4" fill={BLUE} />
    </Svg>
  );
}

function SheetBar() {
  return (
    <div className="flex h-7 border-t border-[#c0c0c0] bg-[#f5f5f5] text-xs text-[#555]">
      <button aria-label="上一页" className="flex w-10 items-center justify-end pt-px pr-[7px] text-[#bbb]">
        <Arrow dir="left" />
      </button>
      <button aria-label="下一页" className="flex w-10 items-center pt-px pl-[7px] text-[#bbb]">
        <Arrow dir="right" />
      </button>
      <button className="my-[2px] flex w-[108px] items-center justify-center gap-[3px] border-l border-[#c0c0c0] pt-[2px]">
        <PageIcon />
        show-text
      </button>
      <button className="-mt-px flex w-[118px] items-center justify-center gap-[3px] border-b-2 border-[#1ba1e2] bg-white pt-1 font-bold text-[#1296db]">
        <PageIcon />
        销售合同审核
      </button>
      <button className="my-[2px] flex w-[95px] items-center justify-center gap-[3px] border-r border-[#c0c0c0] pt-[2px]">
        <PageIcon />
        知识问答
      </button>
      <button className="my-[2px] flex w-[137px] items-center justify-center gap-[3px] border-r border-[#c0c0c0] pt-[2px]">
        <ComponentIcon />
        AI用-对话框组件
      </button>
      <span className="ml-[7px] w-[6px] border border-t-0 border-[#c0c0c0] bg-white" />
      <div className="my-[5px] ml-px flex flex-1 bg-[#ececec] text-black">
        <button aria-label="向左滚动" className="flex w-[17px] items-center justify-center border border-[#b5b5b5] bg-white">
          <Arrow dir="left" />
        </button>
        <span className="w-[244px] border border-[#b5b5b5] bg-white" />
        <button
          aria-label="向右滚动"
          className="ml-auto flex w-[17px] items-center justify-center border border-[#b5b5b5] bg-white"
        >
          <Arrow dir="right" />
        </button>
      </div>
      <span className="ml-px w-[6px] border border-t-0 border-[#c0c0c0] bg-white" />
      <span className="w-[17px] bg-white" />
    </div>
  );
}

function Designer() {
  return (
    <main className="ml-[7px] flex min-w-0 flex-1 flex-col pb-[2px]">
      <div className="flex h-[41px] items-start pt-[9px]">
        <input
          aria-label="单元格名称"
          defaultValue="InCell"
          className="h-[26px] w-[155px] border border-[#cfcfcf] bg-white text-center text-xs text-[#222]"
        />
        <span className="flex h-[26px] w-[25px] items-center justify-center">
          <Svg w={3} h={12}>
            <path d="M.5 0h2v2h-2zM.5 4h2v2h-2zM.5 8h2v2h-2z" fill="#999" />
          </Svg>
        </span>
        <div className="flex h-[26px] w-[122px] items-center border border-[#cfcfcf] bg-white">
          <button aria-label="取消" className="flex flex-1 justify-center text-[#999]">
            <X size={16} strokeWidth={2.500} />
          </button>
          <button aria-label="确认" className="flex flex-1 justify-center text-[#999]">
            <Check size={16} strokeWidth={3} />
          </button>
          <button
            aria-label="插入函数"
            className="flex-1 font-['Liberation_Serif',serif] text-sm font-bold text-[#3f7be0] italic"
          >
            fx
          </button>
        </div>
        <label className="ml-1 flex h-[26px] flex-1 items-center border border-[#cfcfcf] bg-white">
          <input aria-label="公式" className="h-full min-w-0 flex-1 outline-none" />
          <ChevronsDown size={11} className="mr-[3px] text-[#888]" />
        </label>
      </div>
      <div className="flex min-h-0 flex-1 flex-col border border-[#b8b8b8]">
        <div className="flex min-h-0 flex-1">
          <Sheet />
          <VScroll thumb="h-[233px]" split className="mr-px" />
        </div>
        <SheetBar />
      </div>
    </main>
  );
}

/* ---------- 单元格设置 ---------- */

function FormulaField({ label, value }: { label: string; value?: string }) {
  return (
    <div className="flex flex-col gap-[5px]">
      <label htmlFor={label} className="text-[15px] leading-[22px]">
        {label}
      </label>
      <div className="ml-[9px] flex h-[22px]">
        <input
          id={label}
          defaultValue={value}
          className="min-w-0 flex-1 border border-r-0 border-[#c4c4c4] bg-white pl-[6px] text-xs outline-none"
        />
        <button aria-label="编辑公式" className="flex w-[22px] items-center justify-center border border-[#999] bg-[#dcdcdc]">
          <Svg w={15} h={13}>
            <path d="M.5.5h14v12H.5zM.5 4.500h14M.5 8.500h14M5 .5v12M10 .5v12" stroke="#c4c4c4" fill="#fff" />
            <rect width="5" height="3" fill={BLUE} />
            <path d="M5 4l6 5M4.500 6.500v-3h3zM11.500 6.500v3h-3z" stroke={ORANGE} fill={ORANGE} />
          </Svg>
        </button>
      </div>
    </div>
  );
}

function Tick({ label, checked, help }: { label: string; checked?: boolean; help?: boolean }) {
  return (
    <div className="flex h-4 items-center gap-1">
      <label className="flex items-center gap-1 text-xs">
        <span className="relative flex">
          <input
            type="checkbox"
            defaultChecked={checked}
            className="peer h-[13px] w-[13px] appearance-none border border-[#b5b5b5] bg-white"
          />
          <Check
            size={11}
            strokeWidth={3}
            className="pointer-events-none absolute top-px left-px hidden text-[#888] peer-checked:block"
          />
        </span>
        {label}
      </label>
      {help && <Help />}
    </div>
  );
}

function CellSettings() {
  return (
    <aside className="mr-[3px] ml-[7px] flex w-[299px] shrink-0 flex-col text-[#222]">
      <div className="flex h-[46px] items-center pr-[15px] pb-1 pl-[7px]">
        <h2 className="flex-1 text-[15px] text-[#333]">单元格设置</h2>
        <button aria-label="固定" className="text-[#666c7a]">
          <Pin size={15} fill="currentColor" />
        </button>
      </div>
      <div className="flex min-h-0 flex-1 bg-[#fafafa]">
        <div className="min-w-0 flex-1 overflow-hidden pr-[11px] pl-[9px]">
          <div className="flex h-[50px] items-center gap-1 border-b border-[#e5e5e5] pt-[6px] text-sm">
            <MultiLineIcon />
            多行输入框
          </div>
          <div className="pl-[5px]">
            <div className="mt-3 flex items-center gap-[7px]">
              <label htmlFor="css" className="text-[15px] leading-[22px]">
                CSS类名
              </label>
              <Help />
            </div>
            <div className="mt-1 ml-[9px] flex">
              <input id="css" className="h-6 min-w-0 flex-1 border border-[#d5d5d5] bg-white" />
            </div>
            <div className="mt-[14px] flex flex-col gap-[13px] text-[15px] leading-[22px] text-[#1a73d1]">
              <div className="flex items-center gap-[5px]">
                <a href="#command" className="underline underline-offset-2">
                  编辑命令...
                </a>
                <Help />
              </div>
              <div className="flex items-center gap-[5px]">
                <a href="#validate" className="font-bold underline underline-offset-2">
                  数据验证...
                </a>
                <Help />
              </div>
              <a href="#permission" className="underline underline-offset-2">
                单元格权限...
              </a>
            </div>
            <div className="mt-[18px] flex flex-col gap-[18px]">
              <FormulaField label="缺省值" />
              <FormulaField label="水印" value="请将合同文本粘贴于此处，然后点击右上角【提交审核】按钮" />
              <fieldset>
                <legend className="text-[15px] leading-[22px]">其他</legend>
                <div className="mt-[10px] ml-[9px] flex flex-col gap-[15px]">
                  <Tick label="只读" />
                  <Tick label="获得焦点时全选文本内容" />
                  <Tick label="输入时按回车换行" checked help />
                </div>
              </fieldset>
            </div>
          </div>
        </div>
        <VScroll thumb="h-[388px]" />
      </div>
      <nav className="flex h-[21px] text-xs">
        <button className="w-[71px] pl-[14px] text-left">数据绑定</button>
        <button className="w-20 bg-[#fafafa]">单元格设置</button>
        <button className="pl-[7px]">页面设置</button>
      </nav>
    </aside>
  );
}

/* ---------- 查找结果 ---------- */

function Results() {
  return (
    <section className="mt-[5px] mr-[3px] mb-[2px] ml-[3px] flex h-[283px] shrink-0 flex-col text-xs text-[#333]">
      <div className="flex h-6">
        <div className="z-10 -mb-px flex w-[94px] items-center gap-[6px] border border-b-0 border-[#b8b8b8] bg-white pl-[11px]">
          查找结果
          <button aria-label="关闭" className="text-[#888]">
            <X size={14} strokeWidth={2} />
          </button>
        </div>
      </div>
      <div className="flex flex-1 flex-col border border-[#b8b8b8] bg-white px-[2px] pb-[2px]">
        <div className="flex h-[37px] items-center pt-[3px] pl-[7px]">
          <p className="flex-1">show-evidence, 共找到 0 个引用</p>
          <SearchBox label="请输入搜索关键字" width="w-[300px]" />
          <button aria-label="复制" className="mr-[2px] ml-[22px]">
            <Svg w={16} h={18}>
              <path d="M4.500 3.500h7l3.500 3.500v9.500H4.500zM11.500 3.500V7H15M1 14V1h10" stroke="#777" strokeWidth="1.200" />
            </Svg>
          </button>
        </div>
        <div className="flex-1 border border-[#c4c4c4]" />
      </div>
    </section>
  );
}

/* ---------- 状态栏 ---------- */

function StatusBar() {
  return (
    <footer className="flex h-[25px] shrink-0 items-center bg-[#f9f9f9] pt-px pl-[7px] text-xs text-[#222]">
      <button className="flex items-center gap-[6px]">
        <Svg w={14} h={14}>
          <rect x=".5" y=".5" width="13" height="13" fill="#fff" stroke="#888" />
          <rect width="14" height="3" fill={BLUE} />
          <path d="M2 5.500h5M2 8h5M2 10.500h5" stroke={GRAY} />
          <path d="M9 5.500h3M9 8h3M9 10.500h3" stroke="#3fae5a" strokeWidth="1.500" />
        </Svg>
        显示模式
      </button>
      <div className="ml-[6px] flex items-center">
        <button aria-label="命令" className="flex w-[16px] justify-center">
          <Svg w={14} h={14}>
            <rect width="14" height="14" fill="#4a525c" />
            <path d="M3 4l3 2.500L3 9M7.500 10.500h4" stroke="#6fc0f5" strokeWidth="1.200" />
          </Svg>
        </button>
        <button aria-label="数据库" className="flex w-[48px] justify-center">
          <Svg w={12} h={14}>
            <rect x="2" width="8" height="9" rx="1" fill="#efcb5a" />
            <path d="M6 9v3M0 12.500h12" stroke="#999" strokeWidth="1.500" />
          </Svg>
        </button>
        <button
          aria-label="公式"
          className="w-[16px] font-['Liberation_Serif',serif] text-[15px] text-[#3f7be0] italic"
        >
          fx
        </button>
        <button aria-label="输入框" className="flex w-[48px] justify-center">
          <TextBoxIcon t="ab" />
        </button>
        <button aria-label="单元格标签" className="flex h-[22px] w-[20px] items-center justify-center bg-[#d5dcea]">
          <Svg w={16} h={16}>
            <rect x=".5" y="6.500" width="11" height="9" fill="#b9d8f5" stroke="#3a5a9c" />
            <rect x="1" y="7" width="10" height="2" fill={BLUE} />
            <path d="M2 5l5-4h5v4L8 8z" fill="#8a7448" />
            <path d="M10.500 1.500h5v4h-3" stroke="#3fae5a" strokeWidth="1.300" />
          </Svg>
        </button>
        <button aria-label="条件格式" className="flex w-[44px] justify-center">
          <Svg w={15} h={15}>
            <path d="M.5.5h11v11H.5zM.5 4h11M.5 8h11" stroke="#9a9a9a" fill="#fff" />
            <path d="M3 1h4v3H3zM3 8h4v3H3z" fill="#efcb5a" />
            <path d="M3 4h6v4H3z" fill="#2ba9ea" />
            <rect x="7" y="7" width="8" height="8" fill={BLUE} />
            <path d="M9 10h4M9 12.500h4" stroke="#fff" />
          </Svg>
        </button>
        <button aria-label="表单" className="flex w-[20px] justify-center">
          <Svg w={15} h={13}>
            <rect width="15" height="6" fill="#4a76c8" />
            <rect y="7" width="15" height="6" fill="#4a76c8" />
            <path d="M2 3h9M2 10h7" stroke="#fff" strokeWidth="1.500" />
            <circle cx="12" cy="10" r="1.800" fill={ORANGE} />
          </Svg>
        </button>
      </div>
      <span className="ml-auto">480 x 416 像素</span>
      <div className="ml-[18px] flex items-center gap-[3px] text-[#777]">
        <button aria-label="缩小" className="flex h-4 w-[8px] items-center">
          <span className="h-[2px] w-[7px] bg-[#999]" />
        </button>
        <input
          type="range"
          aria-label="缩放"
          defaultValue={50}
          className="h-3 w-[100px] appearance-none bg-[linear-gradient(#999,#999)] bg-[length:100%_2px] bg-center bg-no-repeat [&::-webkit-slider-thumb]:h-3 [&::-webkit-slider-thumb]:w-[3px] [&::-webkit-slider-thumb]:appearance-none [&::-webkit-slider-thumb]:bg-[#888]"
        />
        <button aria-label="放大" className="ml-[2px] flex">
          <Svg w={8} h={8}>
            <path d="M4 0v8M0 4h8" stroke="#888" strokeWidth="1.500" />
          </Svg>
        </button>
      </div>
      <span className="mr-[19px] ml-[16px]">100%</span>
    </footer>
  );
}

export default function App() {
  return (
    <div className="flex h-screen flex-col overflow-hidden bg-[#e5e5e5] font-['Noto_Sans','Noto_Sans_CJK_SC',sans-serif]">
      <div className="shrink-0 border-t border-black bg-[#009fe3]">
        <TitleBar />
        <RibbonTabs />
      </div>
      <Ribbon />
      <div className="flex min-h-0 flex-1 pl-[2px]">
        <ObjectManager />
        <div className="ml-[5px] flex min-w-0 flex-1 flex-col">
          <div className="flex min-h-0 flex-1">
            <CellTypes />
            <Designer />
            <CellSettings />
          </div>
          <Results />
        </div>
      </div>
      <StatusBar />
    </div>
  );
}
